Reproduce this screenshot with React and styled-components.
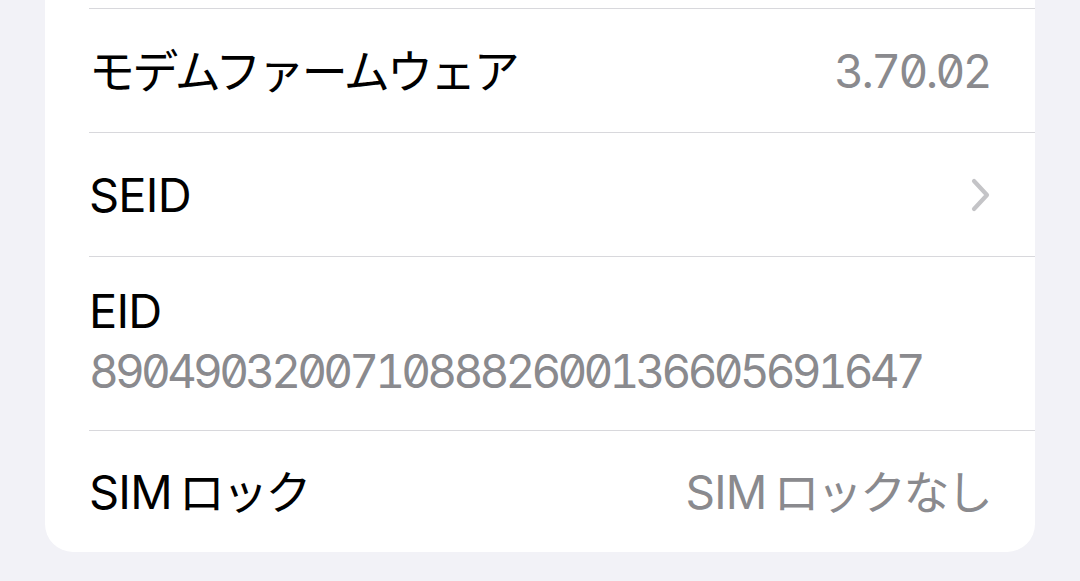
import React from "react";
import styled, { createGlobalStyle } from "styled-components";

const GlobalStyle = createGlobalStyle`
  html, body {
    margin: 0;
    padding: 0;
    background: #f2f2f7;
  }
  body {
    font-family: Inter, "Noto Sans CJK JP", sans-serif;
    -webkit-font-smoothing: antialiased;
  }
`;

const Page = styled.div`
  width: 1080px;
  height: 581px;
  box-sizing: border-box;
  padding: 0 45px;
  background: #f2f2f7;
  overflow: hidden;
`;

const Card = styled.div`
  background: #ffffff;
  border-radius: 0 0 28px 28px;
  padding-top: 8px;
`;

const Row = styled.div`
  box-sizing: border-box;
  margin-left: 44px;
  padding-right: 45px;
  height: ${(props) => props.height}px;
  border-top: 1px solid #d8d8dc;
  display: flex;
  align-items: ${(props) => (props.stacked ? "flex-start" : "center")};
  justify-content: ${(props) => (props.stacked ? "flex-start" : "space-between")};
  flex-direction: ${(props) => (props.stacked ? "column" : "row")};
  padding-top: ${(props) => (props.stacked ? "26px" : "0")};
  gap: ${(props) => (props.stacked ? "4px" : "0")};
`;

const Label = styled.span`
  font-size: 47px;
  line-height: 56px;
  color: #000000;
  letter-spacing: -0.8px;
  white-space: nowrap;
`;

const Value = styled.span`
  font-size: 46px;
  line-height: 56px;
  color: #8a8a8e;
  font-feature-settings: "zero" 1, "tnum" 1;
  letter-spacing: ${(props) => props.spacing || "-0.8px"};
  white-space: nowrap;
`;

const Ja = styled.span`
  font-size: 46px;
  letter-spacing: -2.7px;
  margin-left: ${(props) => (props.afterLatin ? "7px" : "0")};
`;

const Chevron = styled.svg`
  width: 22px;
  height: 36px;
  margin-right: -2px;
`;

function ChevronRight() {
  return (
    <Chevron viewBox="0 0 22 36" fill="none">
      <path
        d="M4 4 L17 18 L4 32"
        stroke="#c4c4c7"
        strokeWidth="4.2"
        strokeLinecap="round"
        strokeLinejoin="round"
      />
    </Chevron>
  );
}

export default function App() {
  return (
    <>
      <GlobalStyle />
      <Page>
        <Card>
          <Row height={124}>
            <Label>
              <Ja>モデムファームウェア</Ja>
            </Label>
            <Value spacing="-2.6px">3.70.02</Value>
          </Row>
          <Row height={124}>
            <Label>SEID</Label>
            <ChevronRight />
          </Row>
          <Row height={174} stacked>
            <Label>EID</Label>
            <Value spacing="-3.8px">89049032007108882600136605691647</Value>
          </Row>
          <Row height={122}>
            <Label>
              SIM<Ja afterLatin>ロック</Ja>
            </Label>
            <Value>
              SIM<Ja afterLatin>ロックなし</Ja>
            </Value>
          </Row>
        </Card>
      </Page>
    </>
  );
}
